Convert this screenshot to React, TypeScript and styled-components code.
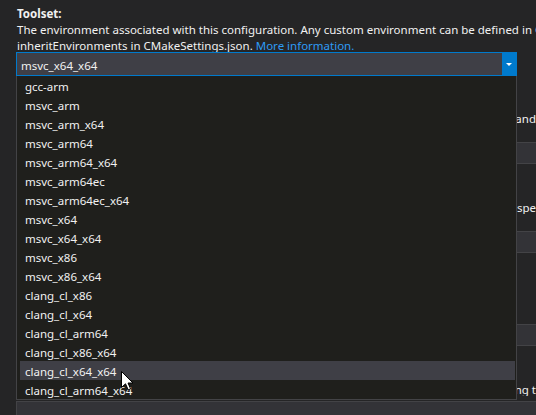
import React from "react";
import styled, { createGlobalStyle, css } from "styled-components";

const GlobalStyle = createGlobalStyle`
  html, body {
    margin: 0;
    padding: 0;
    background: #252526;
    overflow: hidden;
  }
  body {
    font-family: "Segoe UI", "Noto Sans", "Open Sans", sans-serif;
    font-size: 11.5px;
    color: #f1f1f1;
  }
`;

const Page = styled.div`
  width: 536px;
  height: 415px;
  overflow: hidden;
  position: relative;
`;

const Content = styled.div`
  width: 640px;
  padding: 4px 0 0 16px;
  display: flex;
  flex-direction: column;
`;

const Section = styled.section<{ $top: number }>`
  display: flex;
  flex-direction: column;
  margin-top: ${(p) => p.$top}px;
`;

const Heading = styled.div`
  font-weight: 700;
  height: 16px;
  box-sizing: border-box;
  padding: 3px 0 0 1px;
  line-height: 13px;
  white-space: nowrap;
`;

const Desc = styled.div<{ $toEdge?: boolean }>`
  height: 16px;
  box-sizing: border-box;
  padding: 3px 0 0 1px;
  line-height: 13px;
  white-space: nowrap;
  ${(p) =>
    p.$toEdge &&
    css`
      width: 520px;
      display: flex;
      justify-content: flex-end;
      overflow: hidden;
    `}
`;

const Link = styled.a`
  color: #2e9bf5;
  text-decoration: none;
`;

const ComboWrap = styled.div`
  position: relative;
  width: 501px;
`;

const Combo = styled.div`
  height: 24px;
  box-sizing: border-box;
  border: 1px solid #007acc;
  background: #3f3f46;
  display: flex;
  align-items: center;
`;

const ComboText = styled.span`
  flex: 1;
  padding: 3px 0 0 4px;
  line-height: 19px;
`;

const ComboButton = styled.div`
  width: 14px;
  height: 22px;
  background: #007acc;
  display: flex;
  align-items: center;
  justify-content: center;
`;

const TextBox = styled.div<{ $gap: number }>`
  margin-top: ${(p) => p.$gap}px;
  height: 22px;
  box-sizing: border-box;
  border: 1px solid #434346;
  background: #333337;
  width: 620px;
`;

const DropList = styled.ul`
  position: absolute;
  top: 100%;
  left: 0;
  width: 501px;
  box-sizing: border-box;
  margin: 0;
  padding: 0;
  list-style: none;
  background: #1f1f1c;
  border: 1px solid #434346;
  border-top: none;
  z-index: 5;
`;

const Item = styled.li<{ $hover?: boolean }>`
  height: 19px;
  box-sizing: border-box;
  padding: 3px 0 0 5px;
  line-height: 16px;
  margin: 0 1px 0 3px;
  background: ${(p) => (p.$hover ? "#3f3f46" : "transparent")};
  color: #f1f1f1;
  white-space: nowrap;
`;

const Cursor = styled.svg`
  position: absolute;
  left: 121px;
  top: 371px;
  z-index: 10;
`;

const items = [
  "gcc-arm",
  "msvc_arm",
  "msvc_arm_x64",
  "msvc_arm64",
  "msvc_arm64_x64",
  "msvc_arm64ec",
  "msvc_arm64ec_x64",
  "msvc_x64",
  "msvc_x64_x64",
  "msvc_x86",
  "msvc_x86_x64",
  "clang_cl_x86",
  "clang_cl_x64",
  "clang_cl_arm64",
  "clang_cl_x86_x64",
  "clang_cl_x64_x64",
  "clang_cl_arm64_x64",
];

export default function App() {
  return (
    <>
      <GlobalStyle />
      <Page>
        <Content>
          <Section $top={0}>
            <Heading>Toolset:</Heading>
            <Desc>
              The environment associated with this configuration. Any custom environment can be defined in CMakePresets.json
            </Desc>
            <Desc>
              inheritEnvironments in CMakeSettings.json. <Link>More information.</Link>
            </Desc>
            <ComboWrap>
              <Combo>
                <ComboText>msvc_x64_x64</ComboText>
                <ComboButton>
                  <svg width="6" height="3" viewBox="0 0 6 3">
                    <path d="M0 0H6L3 3Z" fill="#ffffff" />
                  </svg>
                </ComboButton>
              </Combo>
              <DropList>
                {items.map((it) => (
                  <Item key={it} $hover={it === "clang_cl_x64_x64"}>
                    {it}
                  </Item>
                ))}
              </DropList>
            </ComboWrap>
          </Section>
          <Section $top={17}>
            <Heading>Build root:</Heading>
            <Desc $toEdge>
              <span>Specifies the directory in which CMake generates build scripts for the chosen generator and</span>
            </Desc>
            <Desc>where CMakeCache.txt will be created.</Desc>
            <TextBox $gap={1} />
          </Section>
          <Section $top={18}>
            <Heading>Install root:</Heading>
            <Desc $toEdge>
              <span>Specifies the directory in which CMake generates install targets for the chosen generator, spe</span>
            </Desc>
            <Desc>relative to the project root unless absolute.</Desc>
            <TextBox $gap={1} />
          </Section>
          <Section $top={18}>
            <Heading>CMake command arguments:</Heading>
            <Desc>Specifies additional command-line options passed to CMake when invoked to generate the</Desc>
            <Desc>project files.</Desc>
            <TextBox $gap={5} />
          </Section>
          <Section $top={18}>
            <Heading>Build command arguments:</Heading>
            <Desc $toEdge>
              <span>Specifies additional switches to pass to the native build tool. For example, when usi ng t</span>
            </Desc>
            <TextBox $gap={5} />
          </Section>
        </Content>
        <Cursor width="13" height="20" viewBox="0 0 13 20">
          <path
            d="M0.5 0.5 L0.5 16.5 L4.5 12.8 L7.2 18.8 L9.6 17.8 L7 12 L12 12 Z"
            fill="#ffffff"
            stroke="#000000"
            strokeWidth="1"
            strokeLinejoin="miter"
          />
        </Cursor>
      </Page>
    </>
  );
}
